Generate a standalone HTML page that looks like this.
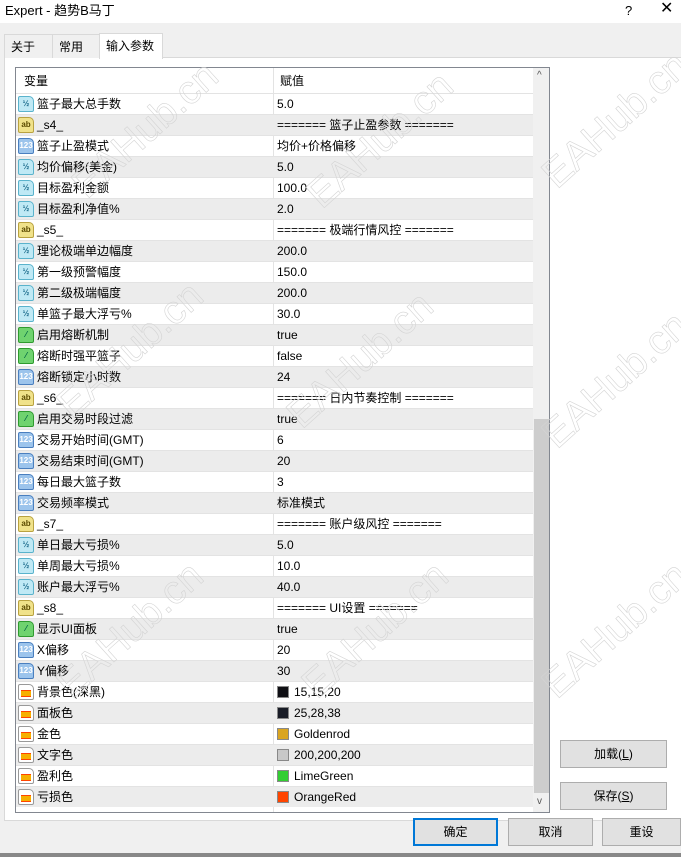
<!DOCTYPE html>
<html><head><meta charset="utf-8"><style>
*{margin:0;padding:0;box-sizing:border-box}
html,body{width:681px;height:857px;overflow:hidden}
body{background:#f0f0f0;font-family:"Liberation Sans","Noto Sans CJK SC",sans-serif;font-size:12px;color:#000;position:relative}
.title{position:absolute;left:0;top:0;width:681px;height:23px;background:#fff;font-size:13px}
.title span{position:absolute;left:5px;top:2px;line-height:18px}
.title .q{left:625px}.title .x{left:660px;font-size:16px;top:0}
.tab{position:absolute;top:34px;height:24px;border:1px solid #d9d9d9;border-bottom:none;background:#f0f0f0;padding:5px 6px 0;line-height:15px}
.tab.a{top:33px;height:26px;background:#fff;border-color:#d9d9d9}
.panel{position:absolute;left:4px;top:57px;width:677px;height:764px;background:#fff;border-top:1px solid #d9d9d9;border-left:1px solid #d9d9d9;border-bottom:1px solid #d9d9d9}
.list{position:absolute;left:15px;top:67px;width:535px;height:746px;border:1px solid #828790;background:#fff;overflow:hidden}
.hdr{position:absolute;left:0;top:0;width:517px;height:25px;background:#fff}
.hdr span{position:absolute;top:6px;line-height:15px}
.row{position:absolute;left:0;width:517px;height:21px;border-top:1px solid #e3e3e3}
.row.g{background:#ececec}
.row .n{position:absolute;left:21px;top:2px;line-height:16px;white-space:nowrap}
.row .v{position:absolute;left:261px;top:2px;line-height:16px;white-space:nowrap}
.col{position:absolute;left:257px;top:0;width:1px;height:746px;background:#e3e3e3}
.ic{position:absolute;left:2px;top:2px;width:16px;height:16px;border:1px solid #888;border-radius:2px 5px 2px 2px;font-size:8px;font-weight:bold;line-height:14px;text-align:center;font-family:"Liberation Sans",sans-serif}
.i1{background:#bfe9f5;border-color:#5ab3cc;color:#1a6a8a}
.i2{background:#f0e28a;border-color:#b9a240;color:#5a4a00}
.i3{background:#9cc4ec;border-color:#4a7fbf;color:#fff}
.i4{background:#6fd36f;border-color:#2f9a2f;color:#064}
.i5{background:#fff;border-color:#999}
.i5:after{content:"";position:absolute;left:2px;top:5px;width:10px;height:5px;background:#f6b000;border-top:1px solid #f40;border-bottom:1px solid #f40}
.sw{position:absolute;left:261px;top:4px;width:12px;height:12px;border:1px solid #888}
.sb{position:absolute;left:517px;top:0;width:17px;height:744px;background:#f0f0f0}
.thumb{position:absolute;left:1px;top:351px;width:15px;height:374px;background:#cdcdcd}
.btn{position:absolute;height:28px;background:#e1e1e1;border:1px solid #adadad;text-align:center;line-height:26px;font-size:12px}
.wmc{position:absolute;left:0;top:0;width:681px;height:857px;overflow:hidden;pointer-events:none}
.wm{position:absolute;font-size:40px;line-height:40px;color:transparent;-webkit-text-stroke:0.6px #d4d4d4;transform:rotate(-42deg);white-space:nowrap;font-family:"Liberation Sans",sans-serif}
</style></head><body>
<div class="title"><span>Expert - 趋势B马丁</span><span class="q">?</span><span class="x">✕</span></div>
<div class="panel"></div>
<div class="tab" style="left:4px;width:49px">关于</div>
<div class="tab" style="left:52px;width:48px">常用</div>
<div class="tab a" style="left:99px;width:64px">输入参数</div>
<div class="list">
<div class="hdr"><span style="left:8px">变量</span><span style="left:264px">赋值</span></div>
<div class="col"></div>
<div id="rows"></div>
<div class="sb"><div style="position:absolute;left:4px;top:2px;font-size:10px;color:#555">^</div><div class="thumb"></div><div style="position:absolute;left:4px;top:728px;font-size:10px;color:#555">v</div></div>
</div>
<div class="btn" style="left:560px;top:740px;width:107px">加载(<u>L</u>)</div>
<div class="btn" style="left:560px;top:782px;width:107px">保存(<u>S</u>)</div>
<div class="btn" style="left:413px;top:818px;width:85px;border:2px solid #0078d7;line-height:24px">确定</div>
<div class="btn" style="left:508px;top:818px;width:85px">取消</div>
<div class="btn" style="left:602px;top:818px;width:79px">重设</div>
<div style="position:absolute;left:0;top:853px;width:681px;height:4px;background:#888"></div>
<div class="wmc">
<div class="wm" style="left:55px;top:110px">EAHub.cn</div>
<div class="wm" style="left:525px;top:100px">EAHub.cn</div>
<div class="wm" style="left:290px;top:120px">EAHub.cn</div>
<div class="wm" style="left:270px;top:340px">EAHub.cn</div>
<div class="wm" style="left:525px;top:360px">EAHub.cn</div>
<div class="wm" style="left:40px;top:330px">EAHub.cn</div>
<div class="wm" style="left:40px;top:610px">EAHub.cn</div>
<div class="wm" style="left:285px;top:610px">EAHub.cn</div>
<div class="wm" style="left:525px;top:610px">EAHub.cn</div>
</div>
<script>
var d=[
[1,"篮子最大总手数","5.0"],[2,"_s4_","======= 篮子止盈参数 ======="],[3,"篮子止盈模式","均价+价格偏移"],[1,"均价偏移(美金)","5.0"],[1,"目标盈利金额","100.0"],[1,"目标盈利净值%","2.0"],
[2,"_s5_","======= 极端行情风控 ======="],[1,"理论极端单边幅度","200.0"],[1,"第一级预警幅度","150.0"],[1,"第二级极端幅度","200.0"],[1,"单篮子最大浮亏%","30.0"],
[4,"启用熔断机制","true"],[4,"熔断时强平篮子","false"],[3,"熔断锁定小时数","24"],[2,"_s6_","======= 日内节奏控制 ======="],[4,"启用交易时段过滤","true"],
[3,"交易开始时间(GMT)","6"],[3,"交易结束时间(GMT)","20"],[3,"每日最大篮子数","3"],[3,"交易频率模式","标准模式"],[2,"_s7_","======= 账户级风控 ======="],
[1,"单日最大亏损%","5.0"],[1,"单周最大亏损%","10.0"],[1,"账户最大浮亏%","40.0"],[2,"_s8_","======= UI设置 ======="],[4,"显示UI面板","true"],
[3,"X偏移","20"],[3,"Y偏移","30"],[5,"背景色(深黑)","15,15,20","#0f0f14"],[5,"面板色","25,28,38","#191c26"],[5,"金色","Goldenrod","#daa520"],
[5,"文字色","200,200,200","#c8c8c8"],[5,"盈利色","LimeGreen","#32cd32"],[5,"亏损色","OrangeRed","#ff4500"]];
var t={1:"½",2:"ab",3:"123",4:"⁄",5:""},h="";
d.forEach(function(r,i){var y=25+i*21;
h+='<div class="row'+(i%2?' g':'')+'" style="top:'+y+'px"><div class="ic i'+r[0]+'">'+t[r[0]]+'</div><span class="n">'+r[1]+'</span>'+
(r[3]?'<div class="sw" style="background:'+r[3]+'"></div><span class="v" style="left:278px">'+r[2]+'</span>':'<span class="v">'+r[2]+'</span>')+'</div>';});
document.getElementById("rows").innerHTML=h;
</script>
</body></html>
